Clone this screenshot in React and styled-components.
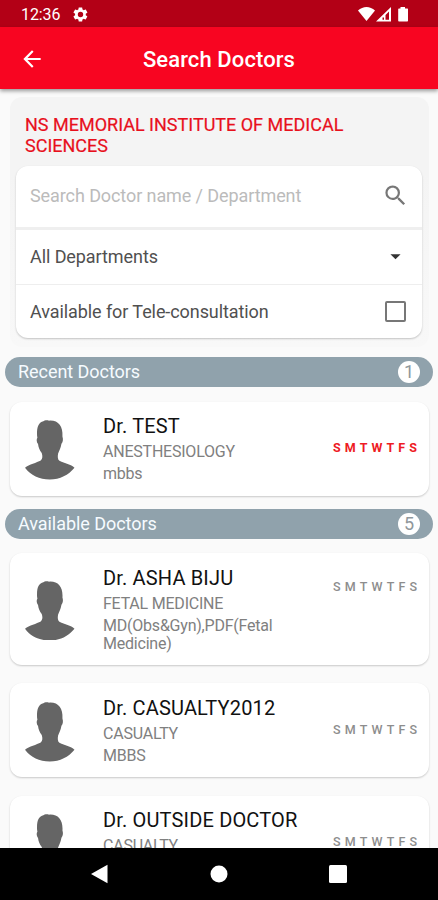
import React from 'react';
import styled, {createGlobalStyle} from 'styled-components';

const DAYS = ['S', 'M', 'T', 'W', 'T', 'F', 'S'];

const recentDoctors = [
  {name: 'Dr. TEST', department: 'ANESTHESIOLOGY', degree: 'mbbs', active: true},
];

const availableDoctors = [
  {name: 'Dr. ASHA BIJU', department: 'FETAL MEDICINE', degree: 'MD(Obs&Gyn),PDF(Fetal Medicine)', tall: true},
  {name: 'Dr. CASUALTY2012', department: 'CASUALTY', degree: 'MBBS'},
  {name: 'Dr. OUTSIDE DOCTOR', department: 'CASUALTY'},
];

const Avatar = () => (
  <AvatarIcon viewBox="0 0 148 178">
    <path d="M36 46C35 18 42 7 55 4C59 0 66 0 72 2C99 0 114 18 112 49C115 58 113 66 109 71C107 84 102 93 99 100C97 111 98 118 103 122C119 130 138 132 148 143C130 165 105 178 74 178C43 178 17 166 0 143C12 132 35 128 47 121C53 116 53 108 50 99C44 91 40 82 39 72C34 66 34 56 37 53Z"/>
  </AvatarIcon>
);

const DoctorCard = ({doctor}) => (
  <Card $tall={doctor.tall}>
    <AvatarCell><Avatar/></AvatarCell>
    <DoctorInfo>
      <DoctorName>{doctor.name}</DoctorName>
      <Department>{doctor.department}</Department>
      {doctor.degree && <Degree>{doctor.degree}</Degree>}
    </DoctorInfo>
    <Days $active={doctor.active} $tall={doctor.tall}>
      {DAYS.map((day, i) => <span key={i}>{day}</span>)}
    </Days>
  </Card>
);

const Section = ({title, count, doctors}) => (
  <section>
    <SectionHeader>
      <span>{title}</span>
      <Count>{count}</Count>
    </SectionHeader>
    <CardList>
      {doctors.map(doctor => <DoctorCard key={doctor.name} doctor={doctor}/>)}
    </CardList>
  </section>
);

const App = () => (
  <Screen>
    <GlobalStyle/>
    <StatusBar>
      <Clock>12:36</Clock>
      <svg width="17" height="17" viewBox="0 0 24 24" fill="#fff">
        <path fillRule="evenodd" d="M19.4 13c.1-.6.1-1.3 0-2l2.1-1.6c.2-.2.3-.4.1-.6l-2-3.5c-.1-.2-.4-.3-.6-.2l-2.5 1c-.5-.4-1.1-.7-1.7-1L14.4 2.4c0-.2-.2-.4-.5-.4h-4c-.2 0-.4.2-.5.4L9 5.1c-.6.3-1.2.6-1.7 1l-2.5-1c-.2-.1-.5 0-.6.2l-2 3.5c-.1.2-.1.4.1.6L4.4 11c-.1.7-.1 1.4 0 2l-2.1 1.6c-.2.2-.2.4-.1.6l2 3.5c.1.2.4.3.6.2l2.5-1c.5.4 1.1.7 1.7 1l.4 2.7c0 .2.2.4.5.4h4c.2 0 .4-.2.5-.4l.3-2.7c.6-.3 1.2-.6 1.7-1l2.5 1c.2.1.5 0 .6-.2l2-3.5c.1-.2.1-.4-.1-.6ZM12 8.2a3.8 3.8 0 1 1 0 7.6a3.8 3.8 0 0 1 0-7.6Z"/>
      </svg>
      <StatusIcons viewBox="0 0 51 16">
        <path d="M0 4.5C5-.3 12-.3 17 4.500L8.500 15Z"/>
        <path fillRule="evenodd" d="M18 15.500L33 1V15.500ZM24.500 11.500V13.800H26V11.500ZM27.500 9V13.800H31V5.500Z"/>
        <path d="M42.500 1H47V2.500H49.500Q50 2.500 50 3.200V14.800Q50 15.600 49.300 15.600H41Q40.200 15.600 40.200 14.800V3.200Q40.200 2.500 41 2.500H42.500Z"/>
      </StatusIcons>
    </StatusBar>
    <AppBar>
      <svg width="26" height="26" viewBox="0 0 24 24" fill="#fff">
        <path d="M20 11H7.830l5.590-5.590L12 4l-8 8 8 8 1.410-1.410L7.830 13H20v-2z"/>
      </svg>
      <Title>Search Doctors</Title>
    </AppBar>
    <Content>
      <FilterPanel>
        <Hospital>NS MEMORIAL INSTITUTE OF MEDICAL SCIENCES</Hospital>
        <FilterCard>
          <SearchRow>
            <Placeholder>Search Doctor name / Department</Placeholder>
            <svg width="27" height="27" viewBox="0 0 24 24" fill="#777">
              <path d="M15.500 14h-.79l-.28-.27A6.471 6.471 0 0 0 16 9.500 6.500 6.500 0 1 0 9.500 16c1.610 0 3.090-.59 4.230-1.570l.27.28v.79l5 4.990L20.490 19l-4.990-5zm-6 0C7.010 14 5 11.990 5 9.500S7.010 5 9.500 5 14 7.010 14 9.500 11.990 14 9.500 14z"/>
            </svg>
          </SearchRow>
          <DepartmentRow>
            <Label>All Departments</Label>
            <svg width="27" height="27" viewBox="0 0 24 24" fill="#333">
              <path d="M7.500 10l4.500 4.500 4.500-4.500z"/>
            </svg>
          </DepartmentRow>
          <TeleRow>
            <Label>Available for Tele-consultation</Label>
            <Checkbox/>
          </TeleRow>
        </FilterCard>
      </FilterPanel>
      <Section title="Recent Doctors" count={1} doctors={recentDoctors}/>
      <Section title="Available Doctors" count={5} doctors={availableDoctors}/>
    </Content>
    <NavBar>
      <svg width="17" height="20" viewBox="0 0 17 20" fill="#fff"><path d="M0 10L16.500 .8V19.200Z"/></svg>
      <svg width="18" height="18" viewBox="0 0 18 18" fill="#fff"><circle cx="9" cy="9" r="8.500"/></svg>
      <svg width="18" height="18" viewBox="0 0 18 18" fill="#fff"><rect width="18" height="18" rx="1.500"/></svg>
    </NavBar>
  </Screen>
);

export default App

const GlobalStyle = createGlobalStyle`
  body {
    margin: 0;
    background: #fafafa;
    font-family: Roboto, sans-serif;
  }
  * {
    box-sizing: border-box;
  }
  svg {
    display: block;
    flex-shrink: 0;
  }
`;

const Screen = styled.div`
  display: flex;
  flex-direction: column;
  width: 438px;
  height: 900px;
  overflow: hidden;
`;

const StatusBar = styled.div`
  display: flex;
  align-items: center;
  flex-shrink: 0;
  height: 27px;
  padding: 1px 29px 0 21px;
  background: #b30016;
  color: #fff;
`;

const Clock = styled.span`
  width: 51px;
  font-size: 16px;
  letter-spacing: -0.1px;
`;

const StatusIcons = styled.svg`
  width: 51px;
  height: 16px;
  margin-left: auto;
  fill: #fff;
`;

const AppBar = styled.header`
  display: flex;
  align-items: center;
  flex-shrink: 0;
  height: 62px;
  padding: 1px 19px 0;
  background: #f80521;
  box-shadow: 0 2px 4px rgba(0, 0, 0, 0.4);
  z-index: 1;
`;

const Title = styled.h1`
  flex: 1;
  margin: 2px 26px 0 0;
  font-size: 22px;
  font-weight: 500;
  letter-spacing: 0.1px;
  text-align: center;
  white-space: nowrap;
  color: #fff;
`;

const Content = styled.main`
  flex: 1;
  min-height: 0;
  overflow: hidden;
  padding-top: 8px;
`;

const FilterPanel = styled.div`
  height: 250px;
  margin: 0 9px 10px 10px;
  padding: 17px 7px 0 6px;
  border-radius: 12px;
  background: linear-gradient(#f4f4f4 30%, #f8f8f8);
`;

const Hospital = styled.h2`
  height: 52px;
  margin: 0;
  padding-left: 9px;
  font-size: 18px;
  font-weight: 400;
  line-height: 21px;
  color: #e8101c;
  -webkit-text-stroke: 0.2px #e8101c;
`;

const FilterCard = styled.div`
  height: 172px;
  border-radius: 12px;
  background: #fff;
  box-shadow: 0 1px 2px rgba(0, 0, 0, 0.22);
`;

const FilterRow = styled.div`
  display: flex;
  align-items: center;
  justify-content: space-between;
  padding: 0 13px 0 14px;
`;

const SearchRow = styled(FilterRow)`
  height: 64px;
  padding-bottom: 2px;
  border-bottom: 3px solid #efefef;
`;

const DepartmentRow = styled(FilterRow)`
  height: 55px;
  padding-bottom: 1px;
  border-bottom: 1px solid #eee;
`;

const TeleRow = styled(FilterRow)`
  height: 53px;
  padding-right: 16px;
`;

const Placeholder = styled.span`
  font-size: 18px;
  letter-spacing: -0.09px;
  color: #bbb;
`;

const Label = styled.span`
  font-size: 18px;
  letter-spacing: -0.08px;
  color: #505050;
`;

const Checkbox = styled.span`
  width: 21px;
  height: 21px;
  border: 2px solid #777;
  border-radius: 2px;
`;

const SectionHeader = styled.div`
  display: flex;
  align-items: center;
  justify-content: space-between;
  height: 30px;
  margin: 0 5px;
  padding: 0 13px;
  border-radius: 15px;
  background: #90a2ac;
  color: #f6fbff;
  font-size: 18px;
  line-height: 20px;
  letter-spacing: -0.05px;
`;

const Count = styled.span`
  width: 22px;
  height: 22px;
  border-radius: 50%;
  background: #fff;
  color: #90989c;
  font-size: 18px;
  line-height: 22px;
  text-align: center;
`;

const CardList = styled.div`
  display: flex;
  flex-direction: column;
  gap: 18.3px;
  padding: 14.5px 9px 13px 10px;
`;

const Card = styled.article`
  display: flex;
  height: ${props => props.$tall ? '112px' : '94px'};
  border-radius: 12px;
  background: #fff;
  box-shadow: 0 1px 2px rgba(0, 0, 0, 0.2);
`;

const AvatarCell = styled.div`
  display: flex;
  align-items: center;
  width: 93px;
  padding: 3px 0 0 15px;
`;

const AvatarIcon = styled.svg`
  width: 49.500px;
  height: 59.500px;
  fill: #656565;
`;

const DoctorInfo = styled.div`
  width: 200px;
  padding-top: 12.500px;
  color: #808080;
  font-size: 16px;
  letter-spacing: -0.22px;
`;

const DoctorName = styled.h3`
  margin: 0 0 4px;
  font-size: 20px;
  font-weight: 400;
  line-height: 25px;
  letter-spacing: 0.16px;
  white-space: nowrap;
  color: #111;
`;

const Department = styled.p`
  margin: 0 0 4px;
  line-height: 18px;
`;

const Degree = styled.p`
  margin: 0;
  line-height: 18px;
`;

const Days = styled.div`
  display: flex;
  justify-content: space-between;
  align-self: flex-start;
  width: 84px;
  margin: ${props => props.$tall ? '26.5px' : '39.5px'} 12px 0 auto;
  font-size: 12.5px;
  font-weight: ${props => props.$active ? 700 : 500};
  line-height: 14px;
  color: ${props => props.$active ? '#ee1b24' : '#8d8d8d'};
`;

const NavBar = styled.nav`
  display: flex;
  align-items: center;
  justify-content: space-between;
  flex-shrink: 0;
  height: 52px;
  padding: 0 91px;
  background: #000;
`;
